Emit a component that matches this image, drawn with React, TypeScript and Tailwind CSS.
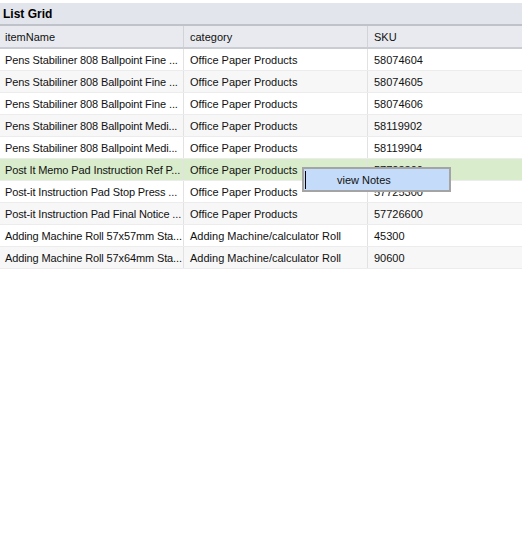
import React from "react";

const rows = [
  ["Pens Stabiliner 808 Ballpoint Fine ...", "Office Paper Products", "58074604"],
  ["Pens Stabiliner 808 Ballpoint Fine ...", "Office Paper Products", "58074605"],
  ["Pens Stabiliner 808 Ballpoint Fine ...", "Office Paper Products", "58074606"],
  ["Pens Stabiliner 808 Ballpoint Medi...", "Office Paper Products", "58119902"],
  ["Pens Stabiliner 808 Ballpoint Medi...", "Office Paper Products", "58119904"],
  ["Post It Memo Pad Instruction Ref P...", "Office Paper Products", "57723300"],
  ["Post-it Instruction Pad Stop Press ...", "Office Paper Products", "57725300"],
  ["Post-it Instruction Pad Final Notice ...", "Office Paper Products", "57726600"],
  ["Adding Machine Roll 57x57mm Sta...", "Adding Machine/calculator Roll", "45300"],
  ["Adding Machine Roll 57x64mm Sta...", "Adding Machine/calculator Roll", "90600"],
];

export default function App() {
  return (
    <div className="w-[522px] h-[544px] bg-white text-[11px] text-[#111] overflow-hidden" style={{ fontFamily: '"Liberation Sans", Arial, sans-serif' }}>
      <div className="mt-[3px] h-[23px] bg-[#e2e5eb] border-b-2 border-[#bfc2c8] flex items-center pl-[3px] font-bold text-[12px] text-black">
        List Grid
      </div>
      <div className="grid grid-cols-[184px_184px_1fr] h-[23px] bg-[#e8eaef] border-b-2 border-[#c9ccd2]">
        <div className="flex items-center pl-[5px] pt-[2px] border-r border-[#d0d3d8]">itemName</div>
        <div className="flex items-center pl-[6px] pt-[2px] border-r border-[#d0d3d8]">category</div>
        <div className="flex items-center pl-[6px] pt-[2px]">SKU</div>
      </div>
      <div className="relative">
        {rows.map((r, i) => {
          const bg = i === 5 ? "bg-[#d9edcc]" : i % 2 === 1 ? "bg-[#f7f7f7]" : "bg-white";
          return (
            <div key={i} className={`grid grid-cols-[184px_184px_1fr] h-[22px] border-b border-[#ececec] ${bg}`}>
              <div className="flex items-center pl-[5px] pt-px border-r border-[#e2e2e2] whitespace-nowrap overflow-hidden tracking-[-0.12px]">{r[0]}</div>
              <div className="flex items-center pl-[6px] pt-px border-r border-[#e2e2e2] whitespace-nowrap overflow-hidden">{r[1]}</div>
              <div className="flex items-center pl-[6px] pt-px whitespace-nowrap">{r[2]}</div>
            </div>
          );
        })}
        <div className="absolute left-[302px] top-[118px] w-[149px] h-[25px] border-2 border-[#a4a4a4] bg-[#c4dcf9] flex items-center">
          <div className="w-px h-[18px] bg-black ml-px"></div>
          <span className="ml-[31px] pt-px text-[11px] text-[#111]">view Notes</span>
        </div>
      </div>
    </div>
  );
}
